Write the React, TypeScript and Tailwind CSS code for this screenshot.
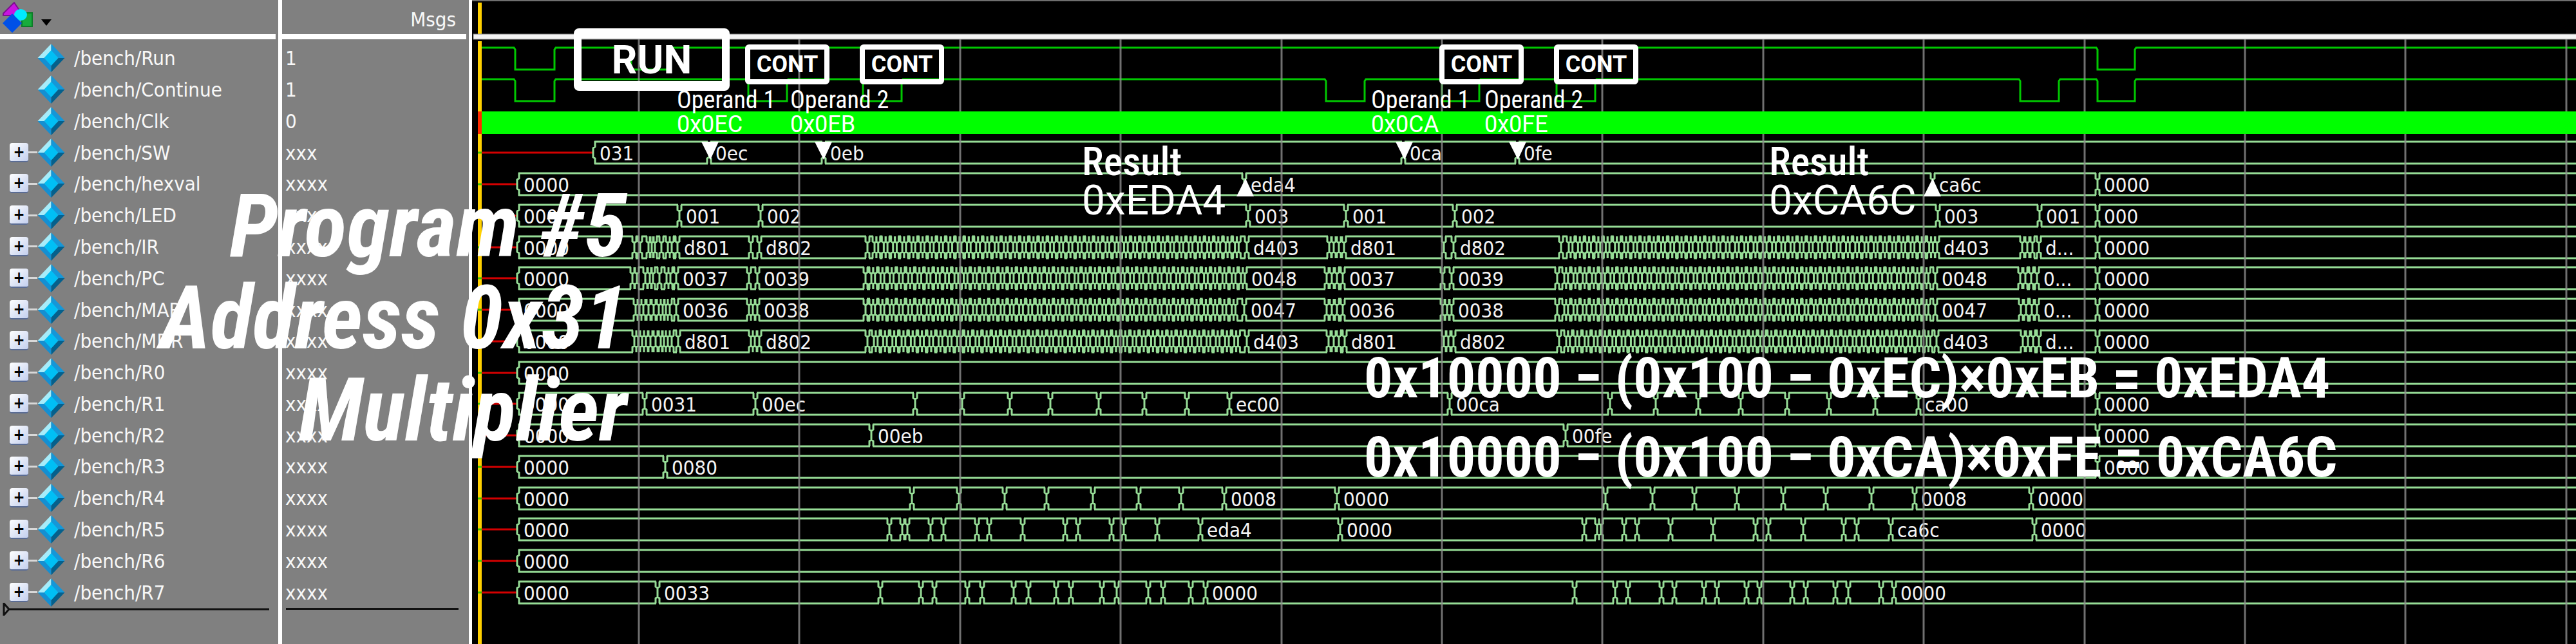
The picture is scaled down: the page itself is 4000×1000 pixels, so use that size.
type Event = [number, string?];
type Burst = { from: number; to: number };
type Bus = { row: number; start: number; first: string; events: Event[]; bursts?: Burst[] };

const ORIGIN = 733;
const FAR = 8000;

const signals = [
  { name: "/bench/Run", value: "1", bus: false },
  { name: "/bench/Continue", value: "1", bus: false },
  { name: "/bench/Clk", value: "0", bus: false },
  { name: "/bench/SW", value: "xxx", bus: true },
  { name: "/bench/hexval", value: "xxxx", bus: true },
  { name: "/bench/LED", value: "xxx", bus: true },
  { name: "/bench/IR", value: "xxxx", bus: true },
  { name: "/bench/PC", value: "xxxx", bus: true },
  { name: "/bench/MAR", value: "xxxx", bus: true },
  { name: "/bench/MDR", value: "xxxx", bus: true },
  { name: "/bench/R0", value: "xxxx", bus: true },
  { name: "/bench/R1", value: "xxxx", bus: true },
  { name: "/bench/R2", value: "xxxx", bus: true },
  { name: "/bench/R3", value: "xxxx", bus: true },
  { name: "/bench/R4", value: "xxxx", bus: true },
  { name: "/bench/R5", value: "xxxx", bus: true },
  { name: "/bench/R6", value: "xxxx", bus: true },
  { name: "/bench/R7", value: "xxxx", bus: true },
];

const marks = (...xs: number[]): Event[] => xs.map((x) => [x]);

const buses: Bus[] = [
  { row: 3, start: 921, first: "031", events: [[1101, "0ec"], [1279, "0eb"], [2179, "0ca"], [2356, "0fe"]] },
  { row: 4, start: 803, first: "0000", events: [[1932, "eda4"], [3001, "ca6c"], [3257, "0000"]] },
  {
    row: 5, start: 803, first: "000",
    events: [[1055, "001"], [1181, "002"], [1938, "003"], [2090, "001"], [2259, "002"], [3009, "003"], [3167, "001"], [3257, "000"]],
  },
  {
    row: 6, start: 803, first: "0000",
    events: [
      ...marks(985, 994, 1007, 1012, 1017, 1027, 1037, 1043), [1052, "d801"],
      ...marks(1166), [1179, "d802"], ...marks(1347), [1936, "d403"],
      ...marks(2064, 2071, 2079), [2087, "d801"], ...marks(2242), [2257, "d802"],
      ...marks(2424), [3008, "d403"], ...marks(3140, 3148, 3156), [3166, "d..."], [3257, "0000"],
    ],
    bursts: [{ from: 1358, to: 1930 }, { from: 2436, to: 3002 }],
  },
  {
    row: 7, start: 803, first: "0000",
    events: [
      ...marks(982, 989, 1002, 1009, 1014, 1024, 1035, 1041), [1050, "0037"],
      ...marks(1163), [1176, "0039"], ...marks(1344), [1933, "0048"],
      ...marks(2060, 2068, 2076), [2085, "0037"], ...marks(2240), [2254, "0039"],
      ...marks(2418), [3005, "0048"], ...marks(3137, 3145, 3154), [3163, "0..."], [3257, "0000"],
    ],
    bursts: [{ from: 1353, to: 1927 }, { from: 2429, to: 3000 }],
  },
  {
    row: 8, start: 803, first: "0000",
    events: [
      ...marks(987, 993, 999, 1007, 1015, 1023, 1029, 1034, 1040), [1050, "0036"],
      ...marks(1163, 1169), [1176, "0038"], ...marks(1344), [1932, "0047"],
      ...marks(2060, 2068, 2076), [2085, "0036"], ...marks(2240, 2247), [2254, "0038"],
      ...marks(2418), [3005, "0047"], ...marks(3138, 3146, 3155), [3163, "0..."], [3257, "0000"],
    ],
    bursts: [{ from: 1353, to: 1926 }, { from: 2429, to: 2999 }],
  },
  {
    row: 9, start: 803, first: "0000",
    events: [
      ...marks(985, 991, 997, 1003, 1010, 1018, 1026, 1031, 1037, 1043), [1053, "d801"],
      ...marks(1166, 1172), [1179, "d802"], ...marks(1347), [1936, "d403"],
      ...marks(2063, 2071, 2079), [2088, "d801"], ...marks(2242, 2249), [2257, "d802"],
      ...marks(2421), [3007, "d403"], ...marks(3141, 3149, 3157), [3166, "d..."], [3257, "0000"],
    ],
    bursts: [{ from: 1357, to: 1930 }, { from: 2432, to: 3001 }],
  },
  { row: 10, start: 803, first: "0000", events: [] },
  {
    row: 11, start: 803, first: "0000",
    events: [
      [1001, "0031"], [1173, "00ec"], ...marks(1421, 1494, 1568, 1631, 1706, 1777, 1843), [1909, "ec00"],
      [2251, "00ca"], ...marks(2500, 2571, 2637, 2703, 2775, 2840, 2912), [2979, "ca00"], [3257, "0000"],
    ],
  },
  { row: 12, start: 803, first: "0000", events: [[1353, "00eb"], [2431, "00fe"], [3257, "0000"]] },
  { row: 13, start: 803, first: "0000", events: [[1033, "0080"], [3257, "0000"]] },
  {
    row: 14, start: 803, first: "0000",
    events: [
      ...marks(1416, 1489, 1560, 1625, 1697, 1768, 1834), [1901, "0008"], [2076, "0000"],
      ...marks(2493, 2566, 2631, 2697, 2769, 2835, 2906), [2973, "0008"], [3154, "0000"],
    ],
  },
  {
    row: 15, start: 803, first: "0000",
    events: [
      ...marks(1381, 1401, 1409, 1445, 1465, 1517, 1536, 1588, 1654, 1674, 1726, 1745, 1797), [1864, "eda4"],
      [2081, "0000"], ...marks(2460, 2480, 2486, 2522, 2542, 2594, 2660, 2726, 2746, 2800, 2863, 2883), [2936, "ca6c"],
      [3159, "0000"],
    ],
  },
  { row: 16, start: 803, first: "0000", events: [] },
  {
    row: 17, start: 803, first: "0000",
    events: [
      [1021, "0033"], ...marks(1367, 1430, 1451, 1502, 1525, 1574, 1597, 1640, 1663, 1711, 1734, 1783, 1806, 1849), [1872, "0000"],
      ...marks(2445, 2508, 2528, 2580, 2600, 2646, 2666, 2712, 2732, 2783, 2804, 2850, 2870, 2921), [2941, "0000"],
    ],
  },
];

const rowTop = (row: number) => Math.round(74 + row * 48.75);
const DROP = 34;

/* One value change: the old value closes and the next one opens around x. */
function crossing(x: number, top: number) {
  const bottom = top + DROP;
  return (
    `M${x - 3} ${top}V${top + 8}L${x} ${top + 10}V${bottom - 10}L${x - 3} ${bottom - 8}V${bottom}` +
    `M${x + 3} ${top}V${top + 8}L${x} ${top + 10}M${x + 3} ${bottom}V${bottom - 8}L${x} ${bottom - 10}`
  );
}

function burstTimes({ from, to }: Burst) {
  const out: number[] = [];
  for (let x = from; x < to; x += 14.35) out.push(x, x + 5.74);
  return out;
}

function busPath(bus: Bus) {
  const top = rowTop(bus.row);
  const bottom = top + DROP;
  const times = [...bus.events.map((e) => e[0]), ...(bus.bursts ?? []).flatMap(burstTimes)].sort((a, b) => a - b);
  let d = `M${bus.start + 3} ${top - 1}V${top + 8}L${bus.start} ${top + 10}V${bottom - 10}L${bus.start + 3} ${bottom - 8}V${bottom + 1}`;
  let x = bus.start;
  for (const t of [...times, FAR]) {
    if (t - x > 8) d += `M${x + 2} ${top}H${t - 2}M${x + 2} ${bottom}H${t - 2}`;
    if (t !== FAR) d += crossing(t, top);
    x = t;
  }
  return d;
}

function wirePath(row: number, lows: [number, number][]) {
  const top = rowTop(row);
  let d = `M748 ${top}`;
  for (const [a, b] of lows) d += `H${a - 2}L${a} ${top + 3}V${top + DROP}H${b}V${top + 3}L${b + 2} ${top}`;
  return `${d}H${FAR}`;
}

const runLows: [number, number][] = [[800, 861], [980, 1041], [3257, 3315]];
const continueLows: [number, number][] = [
  [800, 861], [1162, 1222], [1340, 1400], [2059, 2119], [2239, 2297], [2417, 2477], [3137, 3197], [3257, 3315],
];
const gridLines = Array.from({ length: 24 }, (_, i) => Math.round(992 + i * 249.4));

function Waveform() {
  return (
    <svg className="block h-full w-full font-['DejaVu_Sans_Condensed','DejaVu_Sans',sans-serif] text-[31px]" role="img" aria-label="Signal waveforms">
      <g transform={`translate(${-ORIGIN} 0)`} fill="none">
        <path d={`M0 1H${FAR}`} stroke="#6f6f6f" strokeWidth="2" />
        <path d="M745 4V53M745 64V4000" stroke="#ffd000" strokeWidth="6" />
        <path d={wirePath(0, runLows)} stroke="#00c800" strokeWidth="3" />
        <path d={wirePath(1, continueLows)} stroke="#00c800" strokeWidth="3" />
        {buses.map((bus) => (
          <g key={bus.row}>
            <path d={`M748 ${rowTop(bus.row) + 17}H${bus.start - 1}`} stroke="#d40000" strokeWidth="3" />
            <path d={`M742 ${rowTop(bus.row) + 17}H748`} stroke="#3cc800" strokeWidth="3" />
            <path d={busPath(bus)} stroke="#96dc96" strokeWidth="3" />
            {[[bus.start, bus.first] as Event, ...bus.events].map(([x, label]) =>
              label ? (
                <text key={x} x={x + 10} y={rowTop(bus.row) + 29} fill="#f4f4f4">
                  {label}
                </text>
              ) : null,
            )}
          </g>
        ))}
        {gridLines.map((x) => (
          <path key={x} d={`M${x} 60V4000`} stroke="#8c8c8c" strokeOpacity="0.8" strokeWidth="3" />
        ))}
        <rect x="748" y="173" width={FAR} height="35" fill="#00ff00" />
        <rect x="742" y="173" width="6" height="35" fill="#ff2a00" />
        <rect x="735" y="53" width={FAR} height="8" fill="#f4f4f4" stroke="#8a8a8a" />
      </g>
    </svg>
  );
}

function Gem() {
  return (
    <svg className="h-11 w-[43px] shrink-0" viewBox="0 0 42 44" aria-hidden="true">
      <path d="M21 0L0 22H10L21 11Z" fill="#a6ecfa" />
      <path d="M21 0L42 22H32L21 11Z" fill="#1597d8" />
      <path d="M0 22L21 44V33L10 22Z" fill="#148fd2" />
      <path d="M42 22L21 44V33L32 22Z" fill="#05608c" />
      <path d="M21 10L32 22L21 34L10 22Z" fill="#00bff5" />
    </svg>
  );
}

function SignalTable() {
  return (
    <table className="h-full w-[733px] shrink-0 table-fixed border-separate border-spacing-0 bg-[#808080] font-['DejaVu_Sans_Condensed','DejaVu_Sans',sans-serif] text-[31px] leading-9 text-[#f8f8f8]">
      <thead>
        <tr className="h-[66px] align-top">
          <th className="h-[66px] w-[438px] border-r-[6px] border-white p-0" aria-label="Signal">
            <button className="flex h-[53px] items-center gap-3 pl-1" aria-label="Object types">
              <svg className="h-12 w-12" viewBox="0 0 48 48" aria-hidden="true">
                <path d="M18 1L29 17V21H1V18Z" fill="#c814e0" stroke="#7d1090" strokeWidth="2" />
                <rect x="30" y="17" width="16" height="21" fill="#18ac3c" stroke="#0d7c28" strokeWidth="2" />
                <ellipse cx="28" cy="20" rx="10" ry="9" fill="#00eaff" />
                <path d="M15 18L30 33L15 48L0 33Z" fill="#0050e8" />
              </svg>
              <svg className="mt-4 h-[10px] w-4" viewBox="0 0 16 10" aria-hidden="true">
                <path d="M0 0H16L8 10Z" fill="#000" />
              </svg>
            </button>
            <div className="mr-1 h-2 bg-white" />
          </th>
          <th className="h-[66px] w-[295px] border-r-[5px] border-white p-0 text-right font-normal">
            <div className="h-[53px] pr-5 pt-3">Msgs</div>
            <div className="mr-1 h-2 bg-white" />
          </th>
        </tr>
      </thead>
      <tbody>
        {signals.map((s) => (
          <tr key={s.name}>
            <td className="border-r-[6px] border-white p-0">
              <div className="flex items-center pl-[15px]">
                {s.bus ? (
                  <>
                    <button
                      aria-label={`Expand ${s.name}`}
                      className="flex h-[30px] w-[29px] items-center justify-center rounded-sm border-b-2 border-[#5a6c94] bg-linear-to-br from-white to-[#c3cfee] text-2xl font-bold leading-none text-black"
                    >
                      +
                    </button>
                    <span className="h-[3px] w-[14px] bg-[#d8d8d8]" />
                  </>
                ) : (
                  <span className="w-[43px]" />
                )}
                <Gem />
                <span className="pl-[14px]">{s.name}</span>
              </div>
            </td>
            <td className="border-r-[5px] border-white py-0 pl-[5px] pr-0">{s.value}</td>
          </tr>
        ))}
      </tbody>
      <tfoot>
        <tr className="h-14 align-top">
          <td className="h-14 border-r-[6px] border-white p-0">
            <svg className="-mt-2 h-5 w-[418px]" viewBox="0 0 418 20" aria-hidden="true">
              <path d="M6 1V19L14 10ZM14 10H418" fill="none" stroke="#111" strokeWidth="3" />
            </svg>
          </td>
          <td className="h-14 border-r-[5px] border-white p-0 pr-4 pl-[6px]">
            <div className="h-[3px] bg-[#111]" />
          </td>
        </tr>
      </tfoot>
    </table>
  );
}

const press = "flex h-[62px] w-[131px] items-center justify-center rounded-md border-8 border-white text-[36px] font-bold leading-none";

function Presses({ place }: { place: string }) {
  return (
    <div className={`absolute top-[69px] flex gap-[47px] ${place}`}>
      <div className={press}>CONT</div>
      <div className={press}>CONT</div>
    </div>
  );
}

function Pointer({ up = false }: { up?: boolean }) {
  return (
    <svg className="h-[28px] w-[27px]" viewBox="0 0 27 28" aria-hidden="true">
      <path d={up ? "M0 28H27L14 0Z" : "M0 0H27L14 28Z"} fill="#fff" />
    </svg>
  );
}

function Operands({ values, place }: { values: string[]; place: string }) {
  return (
    <div className={`absolute top-[136px] flex whitespace-nowrap text-[36px] leading-[38px] ${place}`}>
      {values.map((value, i) => (
        <div key={value} className="w-44">
          <p className="font-['Roboto_Condensed','Roboto',sans-serif] text-[38px]">Operand {i + 1}</p>
          <p>{value}</p>
          <div className="pl-[38px] pt-2">
            <Pointer />
          </div>
        </div>
      ))}
    </div>
  );
}

function Result({ value, place }: { value: string; place: string }) {
  return (
    <div className={`absolute top-[220px] flex w-[267px] items-center justify-between whitespace-nowrap text-[64px] leading-[61px] ${place}`}>
      <div>
        <p className="font-['Roboto_Condensed','Roboto',sans-serif] text-[62px] font-medium">Result</p>
        <p>{value}</p>
      </div>
      <div className="pt-5">
        <Pointer up />
      </div>
    </div>
  );
}

function Annotations() {
  return (
    <div className="pointer-events-none absolute inset-0 font-['Roboto',sans-serif] text-white">
      <div className="absolute left-[891px] top-[44px] flex h-[97px] w-[242px] items-center justify-center rounded-lg border-x-[12px] border-y-[15px] border-white text-[62px] font-bold leading-none">
        RUN
      </div>
      <Presses place="left-[1157px]" />
      <Presses place="left-[2235px]" />
      <Operands values={["0x0EC", "0x0EB"]} place="left-[1051px]" />
      <Operands values={["0x0CA", "0x0FE"]} place="left-[2129px]" />
      <Result value="0xEDA4" place="left-[1680px]" />
      <Result value="0xCA6C" place="left-[2747px]" />
      <h1 className="absolute left-0 top-[280px] w-[974px] text-right font-['Roboto_Condensed','Roboto',sans-serif] text-[136px] font-bold italic leading-[143px]">
        Program #5
        <br />
        Address 0x31
        <br />
        Multiplier
      </h1>
      <div className="absolute left-[2118px] top-[525px] whitespace-nowrap font-['Roboto_Condensed','Roboto',sans-serif] text-[88px] font-bold leading-[123px]">
        <p>0x10000 − (0x100 − 0xEC)×0xEB = 0xEDA4</p>
        <p>0x10000 − (0x100 − 0xCA)×0xFE = 0xCA6C</p>
      </div>
    </div>
  );
}

export default function App() {
  return (
    <main className="relative flex h-screen overflow-hidden bg-black">
      <SignalTable />
      <div className="min-w-0 flex-1 overflow-hidden">
        <Waveform />
      </div>
      <Annotations />
    </main>
  );
}
